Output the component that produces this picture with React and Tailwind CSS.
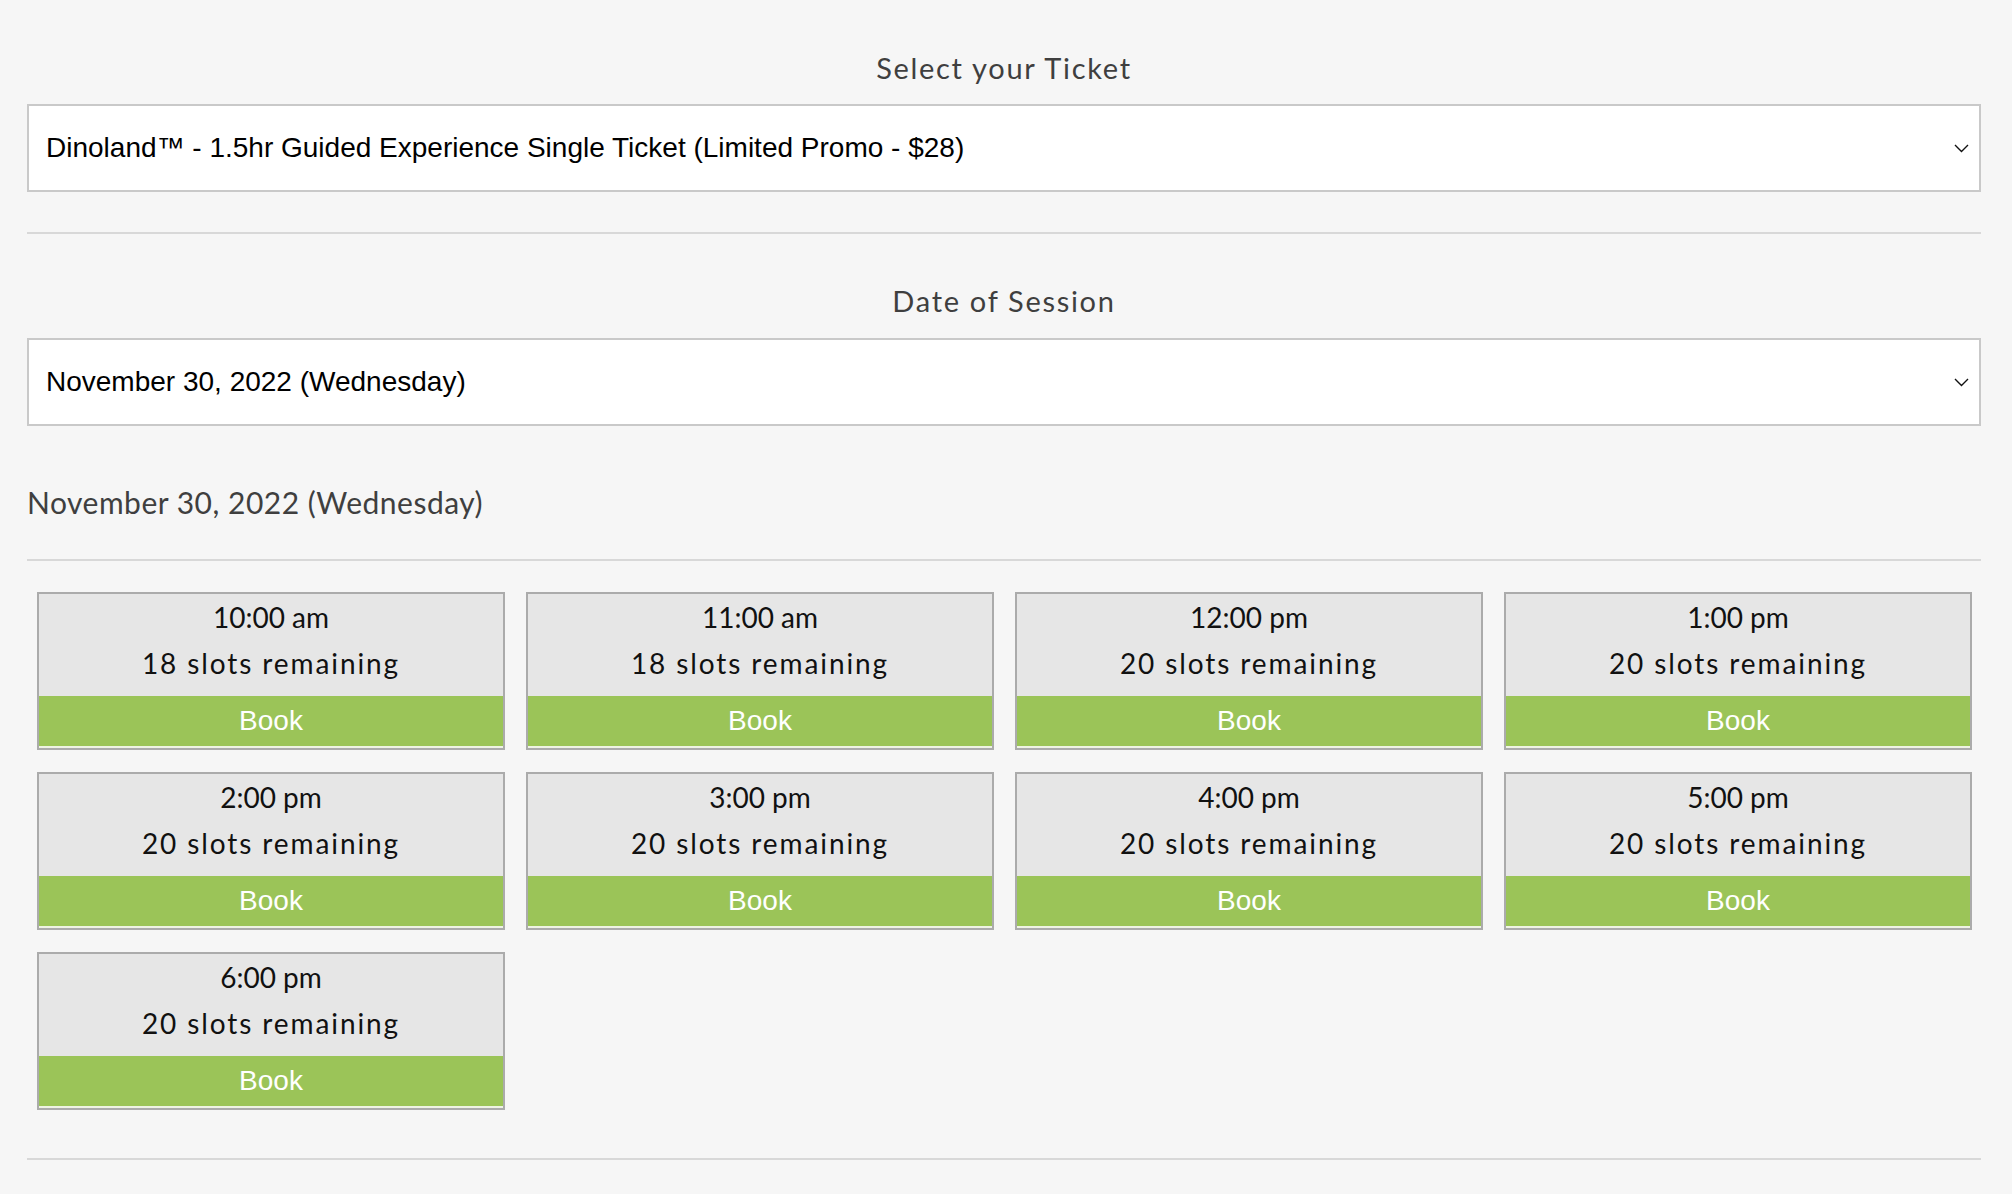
import React from 'react';

const SLOTS = [
  { time: '10:00 am', left: 18 },
  { time: '11:00 am', left: 18 },
  { time: '12:00 pm', left: 20 },
  { time: '1:00 pm', left: 20 },
  { time: '2:00 pm', left: 20 },
  { time: '3:00 pm', left: 20 },
  { time: '4:00 pm', left: 20 },
  { time: '5:00 pm', left: 20 },
  { time: '6:00 pm', left: 20 },
];

const Chevron = () => (
  <svg width="15" height="10" viewBox="0 0 15 10" fill="none" className="shrink-0">
    <path d="M1 2l6.5 6.5L14 2" stroke="#111" strokeWidth="1.4" />
  </svg>
);

const SelectBox = ({ value }) => (
  <div className="h-[88px] border-2 border-[#c9c9c9] bg-white flex items-center justify-between pl-[17px] pr-[10px]">
    <span className="text-[28px] text-black font-['Liberation_Sans',Arial,sans-serif]">{value}</span>
    <Chevron />
  </div>
);

const SlotCard = ({ time, left }) => (
  <div className="border-2 border-[#ababab] bg-[#e6e6e6] flex flex-col">
    <div className="pt-[5px] pb-[15px] text-center text-[28px] text-[#111] font-['Lato',sans-serif]">
      <div className="h-[36px] leading-[36px]">{time}</div>
      <div className="h-[36px] leading-[36px] mt-[10px] tracking-[1.9px]">{left} slots remaining</div>
    </div>
    <button className="h-[52px] bg-[#9bc458] text-white text-[28px] font-['Liberation_Sans',Arial,sans-serif] border-b-2 border-[#eef3e4]">
      Book
    </button>
  </div>
);

export default function App() {
  return (
    <div className="min-h-screen bg-[#f6f6f6] font-['Lato',sans-serif]">
      <div className="pl-[27px] pr-[31px] pt-[50px] pb-[40px]">
        {/* Ticket */}
        <h2 className="h-[36px] leading-[36px] text-center text-[29px] tracking-[1.7px] text-[#3f3f3f]">Select your Ticket</h2>
        <div className="mt-[18px]">
          <SelectBox value="Dinoland™ - 1.5hr Guided Experience Single Ticket (Limited Promo - $28)" />
        </div>
        <div className="mt-[40px] h-[2px] bg-[#d8d8d8]" />

        {/* Date */}
        <h2 className="mt-[49px] h-[36px] leading-[36px] text-center text-[29px] tracking-[1.7px] text-[#3f3f3f]">Date of Session</h2>
        <div className="mt-[19px]">
          <SelectBox value="November 30, 2022 (Wednesday)" />
        </div>

        <h3 className="mt-[56px] h-[40px] leading-[40px] text-[30px] tracking-[0.5px] text-[#3f3f3f]">November 30, 2022 (Wednesday)</h3>
        <div className="mt-[37px] h-[2px] bg-[#d8d8d8]" />

        {/* Sessions */}
        <div className="mt-[31px] pl-[10px] pr-[9px] grid grid-cols-4 gap-x-[21px] gap-y-[22px]">
          {SLOTS.map((s) => (
            <SlotCard key={s.time} time={s.time} left={s.left} />
          ))}
        </div>
        <div className="mt-[48px] h-[2px] bg-[#d8d8d8]" />
      </div>
    </div>
  );
}
